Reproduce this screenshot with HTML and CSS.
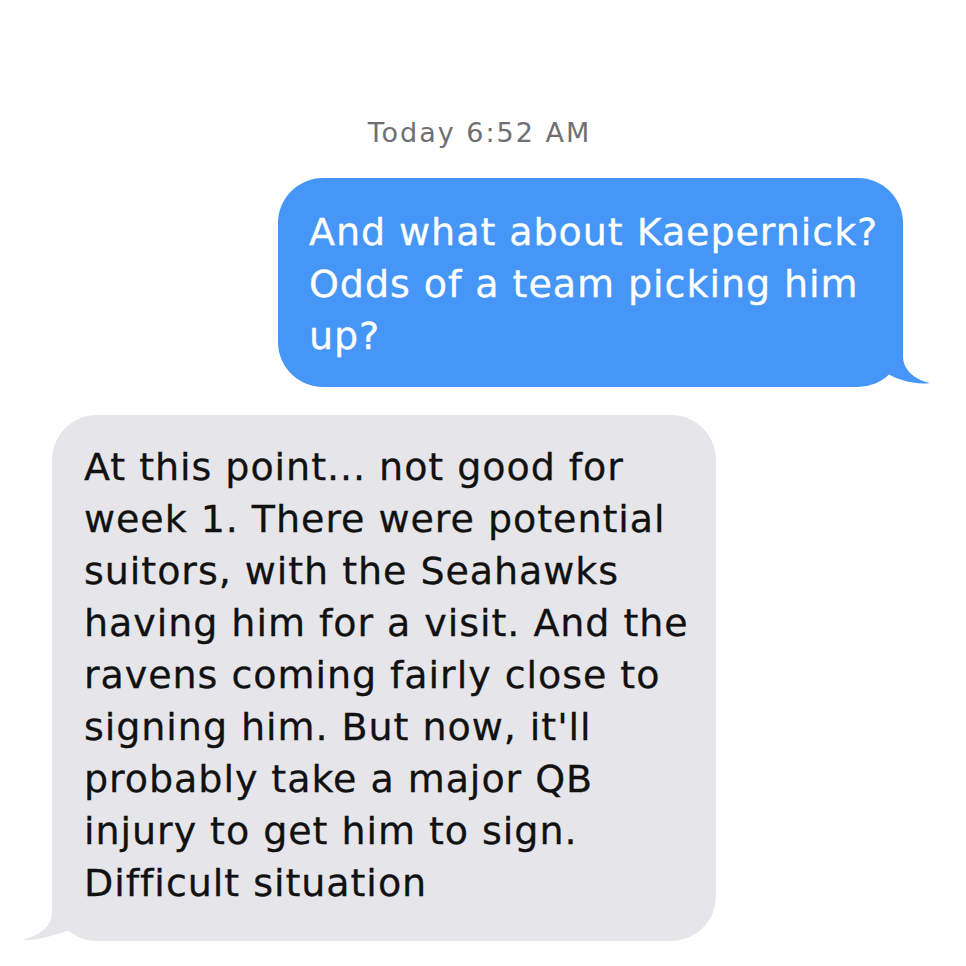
FILE: index.html
```html
<!DOCTYPE html>
<html lang="en">
<head>
  <meta charset="UTF-8" />
  <title>Messages</title>
  <meta name="viewport" content="width=device-width, initial-scale=1" />
  <link rel="stylesheet" href="styles.css">
</head>
<body>
  <div class="thread">
    <div class="stamp">Today 6:52 AM</div>

    <div class="msg sent">
      And what about Kaepernick?<br>
      Odds of a team picking him<br>
      up?
      <svg class="tail" width="75" height="48" viewBox="0 0 75 48">
        <path d="M0 0 L45 0 L45 17 C45 30 55 40 72 44 C60 46 42 42 30 35 C22 42 12 47 0 47 Z"/>
      </svg>
    </div>

    <div class="msg recv">
      At this point... not good for<br>
      week 1. There were potential<br>
      suitors, with the Seahawks<br>
      having him for a visit. And the<br>
      ravens coming fairly close to<br>
      signing him. But now, it'll<br>
      probably take a major QB<br>
      injury to get him to sign.<br>
      Difficult situation
      <svg class="tail" width="78" height="48" viewBox="0 0 78 48">
        <path d="M78 0 L33 0 L33 20 C33 33 22 42 3 47 C15 48 30 44 51 37 C59 44 68 48 78 48 Z"/>
      </svg>
    </div>
  </div>
</body>
</html>
```

FILE: styles.css
```css
:root{
  --blue:#4596f6;
  --grey:#e5e5ea;
}
body{
  margin:0;background:#fff;
  font-family:'DejaVu Sans',Verdana,sans-serif;
}
.thread{
  display:flex;flex-direction:column;
  padding:117px 63px 0 52px;
}
.stamp{
  align-self:center;margin-left:4px;
  font-size:27px;line-height:32px;letter-spacing:2px;color:#6f6f74;
}
.msg{
  position:relative;z-index:0;box-sizing:border-box;
  font-size:38px;line-height:52px;letter-spacing:0.95px;
  border-radius:45px;white-space:nowrap;
  -webkit-text-stroke:0.3px currentColor;
}
.msg .tail{position:absolute;bottom:0;z-index:-1;}
.sent{
  align-self:flex-end;width:625px;margin-top:29px;
  padding:28px 20px 25px 31px;
  background:var(--blue);color:#fff;
}
.sent .tail{right:-30px;fill:var(--blue);}
.recv{
  align-self:flex-start;width:664px;margin-top:28px;
  padding:26px 20px 32px 32px;
  background:var(--grey);color:#111;
}
.recv .tail{left:-33px;fill:var(--grey);}
```
